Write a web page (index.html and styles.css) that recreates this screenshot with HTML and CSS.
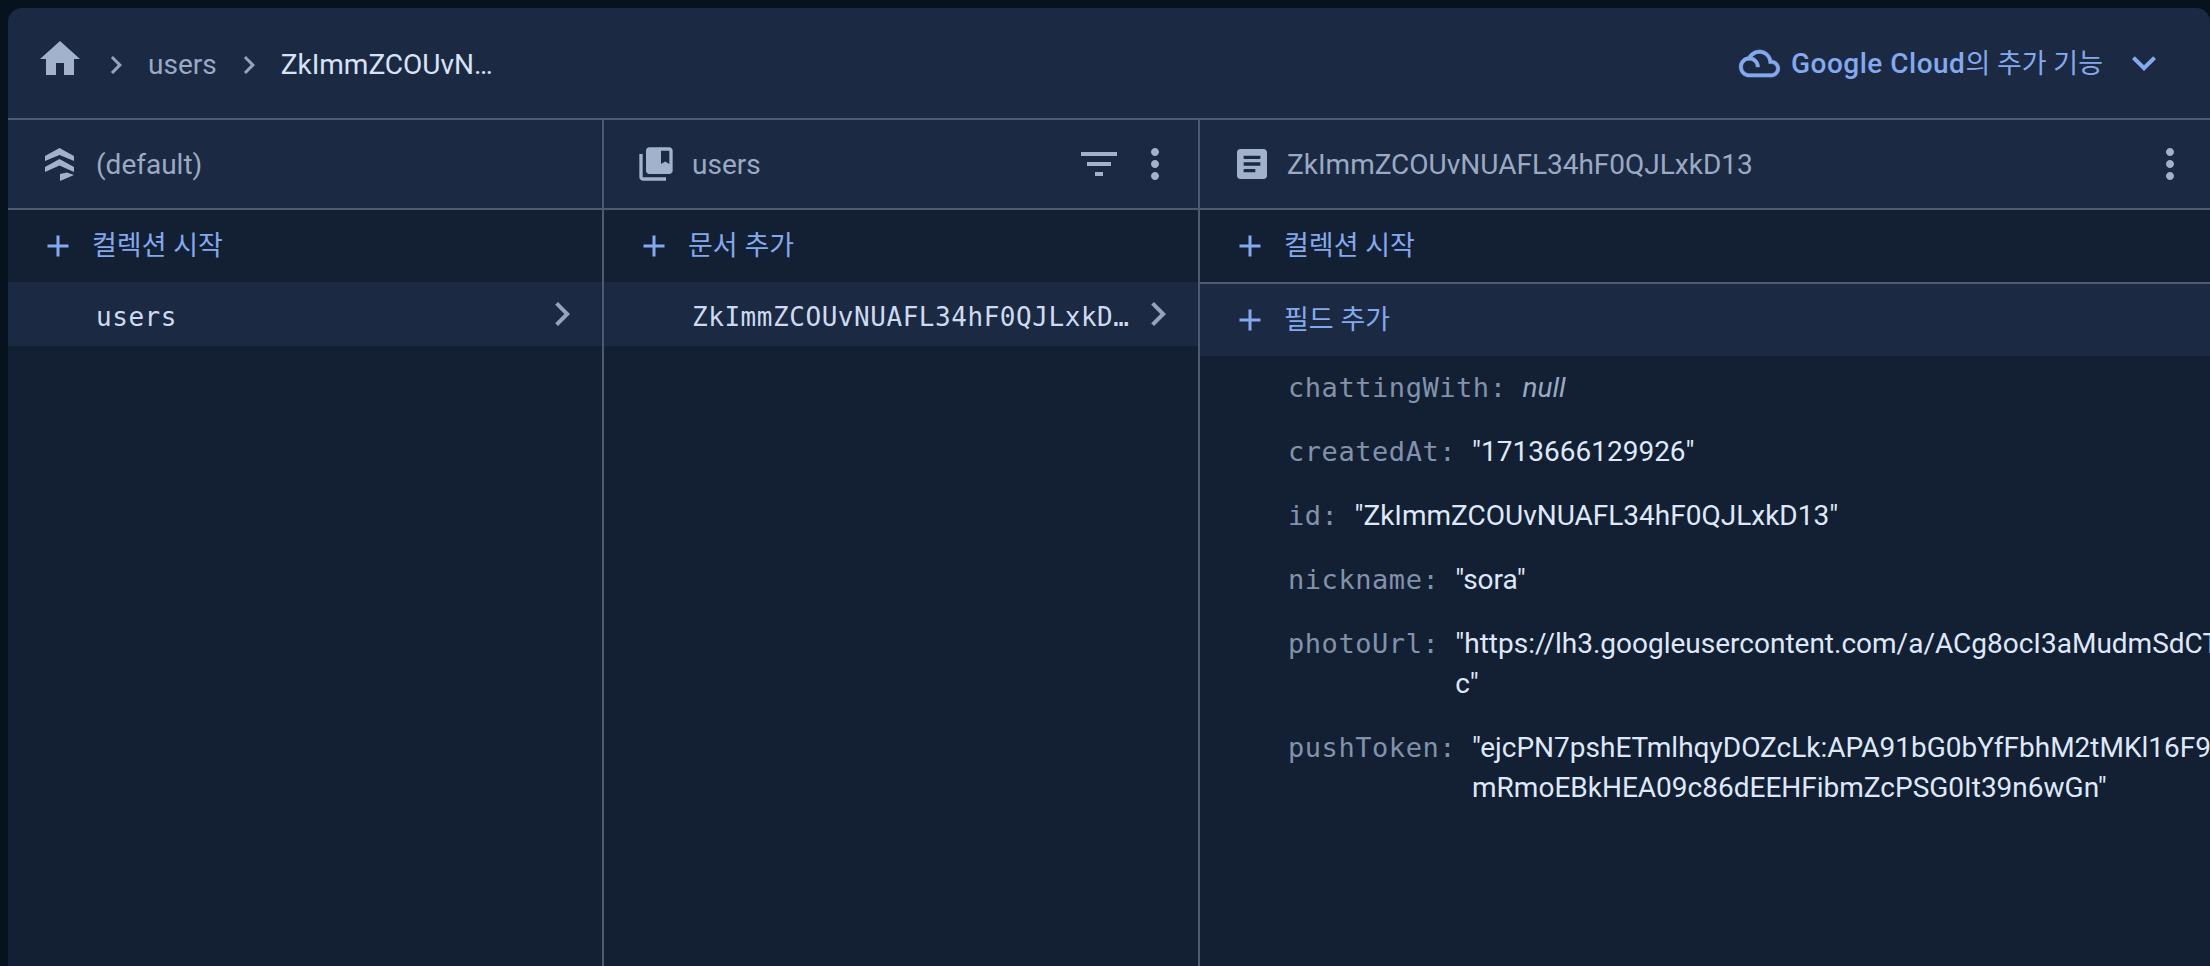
FILE: index.html
```html
<!DOCTYPE html>
<html lang="ko">
<head>
<meta charset="utf-8">
<title>Firestore</title>
<link rel="stylesheet" href="styles.css">
</head>
<body>
<main class="panel">
  <header class="topbar">
    <nav class="crumbs">
      <svg class="ic-home" viewBox="0 0 24 24"><path d="M10 20v-6h4v6h5v-8h3L12 3 2 12h3v8z"/></svg>
      <svg class="ic-crumb" viewBox="0 0 24 24"><path d="M10 6L8.59 7.41 13.17 12l-4.58 4.59L10 18l6-6z"/></svg>
      <span class="crumb">users</span>
      <svg class="ic-crumb" viewBox="0 0 24 24"><path d="M10 6L8.59 7.41 13.17 12l-4.58 4.59L10 18l6-6z"/></svg>
      <span class="crumb current">ZkImmZCOUvN…</span>
    </nav>
    <div class="cloud">
      <svg class="ic-cloud" viewBox="0 4 24 16"><path d="M19.35 10.04C18.67 6.59 15.64 4 12 4c-2.96 0-5.500 1.640-6.840 4.050C2.250 8.360 0 10.830 0 14c0 3.310 2.690 6 6 6h13c2.760 0 5-2.240 5-5 0-2.640-2.050-4.780-4.650-4.960zM19 18H6c-2.210 0-4-1.790-4-4s1.790-4 4-4 4 1.790 4 4h2c0-2.760-1.860-5.080-4.400-5.780C8.610 6.880 10.200 6 12 6c3.030 0 5.500 2.470 5.500 5.500v.5H19c1.650 0 3 1.350 3 3s-1.350 3-3 3z"/></svg>
      <span class="cloud-label">Google Cloud<span class="ko">의 추가 기능</span></span>
      <svg class="ic-expand" viewBox="0 0 24 24"><path d="M16.590 8.590L12 13.170 7.410 8.590 6 10l6 6 6-6z"/></svg>
    </div>
  </header>
  <div class="columns">
    <section class="col col-a">
      <div class="col-head">
        <svg class="ic-head ic-layers" viewBox="0 0 29 33"><path d="M14.500 0L29 8V13L14.500 7 0 13V8zM14.500 11L29 19V24L14.500 17.500 0 24V19zM15 26L22 24.500 29 27 15 33z"/></svg>
        <span class="head-title">(default)</span>
      </div>
      <div class="action">
        <svg class="ic-plus" viewBox="0 0 24 24"><path d="M19 13h-6v6h-2v-6H5v-2h6V5h2v6h6v2z"/></svg>
        <span class="action-label">컬렉션 시작</span>
      </div>
      <div class="row selected">
        <span class="row-text">users</span>
        <svg class="ic-chev" viewBox="0 0 24 24"><path d="M10 6L8.590 7.410 13.170 12l-4.580 4.590L10 18l6-6z"/></svg>
      </div>
    </section>
    <section class="col col-b">
      <div class="col-head">
        <svg class="ic-head ic-book" viewBox="0 0 24 24"><path d="M4 6H2v14c0 1.100.9 2 2 2h14v-2H4V6zm16-4H8c-1.100 0-2 .9-2 2v12c0 1.100.9 2 2 2h12c1.100 0 2-.9 2-2V4c0-1.100-.9-2-2-2zm0 10l-2.500-1.500L15 12V4h5v8z"/></svg>
        <span class="head-title">users</span>
        <svg class="ic-tool ic-filter" viewBox="0 0 24 24"><path d="M10 18h4v-2h-4v2zM3 6v2h18V6H3zm3 7h12v-2H6v2z"/></svg>
        <svg class="ic-tool" viewBox="0 0 24 24"><path d="M12 8c1.100 0 2-.9 2-2s-.9-2-2-2-2 .9-2 2 .9 2 2 2zm0 2c-1.100 0-2 .9-2 2s.9 2 2 2 2-.9 2-2-.9-2-2-2zm0 6c-1.100 0-2 .9-2 2s.9 2 2 2 2-.9 2-2-.9-2-2-2z"/></svg>
      </div>
      <div class="action">
        <svg class="ic-plus" viewBox="0 0 24 24"><path d="M19 13h-6v6h-2v-6H5v-2h6V5h2v6h6v2z"/></svg>
        <span class="action-label">문서 추가</span>
      </div>
      <div class="row selected">
        <span class="row-text">ZkImmZCOUvNUAFL34hF0QJLxkD13</span>
        <svg class="ic-chev" viewBox="0 0 24 24"><path d="M10 6L8.590 7.410 13.170 12l-4.580 4.590L10 18l6-6z"/></svg>
      </div>
    </section>
    <section class="col col-c">
      <div class="col-head">
        <svg class="ic-head ic-doc" viewBox="0 0 24 24"><path d="M19 3H5c-1.100 0-2 .9-2 2v14c0 1.100.9 2 2 2h14c1.100 0 2-.9 2-2V5c0-1.100-.9-2-2-2zm-5 14H7v-2h7v2zm3-4H7v-2h10v2zm0-4H7V7h10v2z"/></svg>
        <span class="head-title">ZkImmZCOUvNUAFL34hF0QJLxkD13</span>
        <svg class="ic-tool" viewBox="0 0 24 24"><path d="M12 8c1.100 0 2-.9 2-2s-.9-2-2-2-2 .9-2 2 .9 2 2 2zm0 2c-1.100 0-2 .9-2 2s.9 2 2 2 2-.9 2-2-.9-2-2-2zm0 6c-1.100 0-2 .9-2 2s.9 2 2 2 2-.9 2-2-.9-2-2-2z"/></svg>
      </div>
      <div class="action">
        <svg class="ic-plus" viewBox="0 0 24 24"><path d="M19 13h-6v6h-2v-6H5v-2h6V5h2v6h6v2z"/></svg>
        <span class="action-label">컬렉션 시작</span>
      </div>
      <div class="action add-field">
        <svg class="ic-plus" viewBox="0 0 24 24"><path d="M19 13h-6v6h-2v-6H5v-2h6V5h2v6h6v2z"/></svg>
        <span class="action-label">필드 추가</span>
      </div>
      <dl class="fields">
        <div class="field"><dt>chattingWith:</dt><dd class="null">null</dd></div>
        <div class="field"><dt>createdAt:</dt><dd>"1713666129926"</dd></div>
        <div class="field"><dt>id:</dt><dd>"ZkImmZCOUvNUAFL34hF0QJLxkD13"</dd></div>
        <div class="field"><dt>nickname:</dt><dd>"sora"</dd></div>
        <div class="field"><dt>photoUrl:</dt><dd>"https://lh3.googleusercontent.com/a/ACg8ocI3aMudmSdCT<br>c"</dd></div>
        <div class="field"><dt>pushToken:</dt><dd>"ejcPN7pshETmlhqyDOZcLk:APA91bG0bYfFbhM2tMKl16F9<br>mRmoEBkHEA09c86dEEHFibmZcPSG0It39n6wGn"</dd></div>
      </dl>
    </section>
  </div>
</main>
</body>
</html>
```
FILE: styles.css
```css
* { box-sizing: border-box; }
html, body { height: 100%; }
body {
  margin: 0;
  background: #07121f;
  font-family: Roboto, "Noto Sans CJK KR", sans-serif;
  font-size: 28px;
  overflow: hidden;
}
svg { fill: currentColor; flex: none; display: block; }
.panel {
  height: 100%;
  margin-left: 8px;
  border-top: 8px solid #07121f;
  display: flex;
  flex-direction: column;
  overflow: hidden;
}
.topbar {
  height: 112px;
  flex: none;
  background: #1b2a42;
  border-radius: 14px 14px 0 0;
  border-bottom: 2px solid #4c5a72;
  display: flex;
  align-items: center;
  justify-content: space-between;
  padding: 0 42px 0 28px;
  color: #9aa9c4;
}
.crumbs { display: flex; align-items: center; }
.ic-home { width: 48px; height: 48px; color: #a3b2cc; margin: 0 14px 8px 0; }
.ic-crumb { width: 36px; height: 36px; margin: 4px 14px 0 0; color: #95a3bc; }
.crumb { color: #9aa9c4; margin: 2px 14px 0 0; }
.current { color: #d8e2f8; margin-right: 0; }
.cloud { display: flex; align-items: center; color: #84a9ee; font-weight: 500; }
.ic-cloud { width: 41px; height: 27px; margin-right: 11px; stroke: currentColor; stroke-width: .35; overflow: visible; }
.cloud-label { padding-bottom: 3px; letter-spacing: .5px; }
.ko { font-size: 27px; font-weight: 400; letter-spacing: 0; }
.ic-expand { width: 48px; height: 48px; margin-left: 17px; }
.columns { flex: 1; display: flex; min-height: 0; background: #132033; }
.col { display: flex; flex-direction: column; flex: none; border-right: 2px solid #4c5a72; }
.col-a, .col-b { width: 596px; }
.col-c { flex: 1; border-right: 0; min-width: 0; overflow: hidden; }
.col-head {
  height: 90px;
  flex: none;
  background: #1b2a42;
  border-bottom: 2px solid #4c5a72;
  display: flex;
  align-items: center;
  padding: 0 19px 0 37px;
  color: #9aa9c4;
}
.col-b .col-head { padding-left: 32px; }
.col-c .col-head { padding: 0 16px 0 32px; }
.ic-head { color: #a3b2cc; }
.ic-layers { width: 29px; height: 33px; margin-right: 22px; }
.ic-book { width: 40px; height: 40px; margin-right: 16px; }
.ic-doc { width: 40px; height: 40px; margin-right: 15px; }
.head-title { flex: 1; }
.ic-tool { width: 48px; height: 48px; color: #a3b2cc; }
.ic-filter { margin-right: 8px; }
.action {
  height: 72px;
  flex: none;
  display: flex;
  align-items: center;
  padding-left: 32px;
  color: #84a9ee;
}
.action-label { font-size: 27px; padding-bottom: 5px; }
.ic-plus { width: 36px; height: 36px; margin-right: 16px; }
.add-field { height: 74px; background: #1b2a42; border-top: 2px solid #4c5a72; }
.row {
  height: 64px;
  flex: none;
  display: flex;
  align-items: center;
  padding: 0 16px 0 88px;
  color: #cfdaf2;
}
.selected { background: #1b2a42; }
.row-text {
  flex: 1;
  min-width: 0;
  font-family: "DejaVu Sans Mono", monospace;
  font-size: 26px;
  letter-spacing: .55px;
  white-space: nowrap;
  overflow: hidden;
  text-overflow: ellipsis;
  padding-top: 6px;
}
.ic-chev { width: 48px; height: 48px; color: #95a3bc; }
.fields { margin: 0; padding: 0; }
.field {
  display: flex;
  gap: 16px;
  padding: 12px 0 12px 88px;
  line-height: 40px;
}
dt {
  font-family: "DejaVu Sans Mono", monospace;
  font-size: 27px;
  letter-spacing: .55px;
  color: #8292ac;
  flex: none;
}
dd { margin: 0; color: #dfe8fa; white-space: nowrap; }
.null { color: #9aa9c4; font-style: italic; }
```
